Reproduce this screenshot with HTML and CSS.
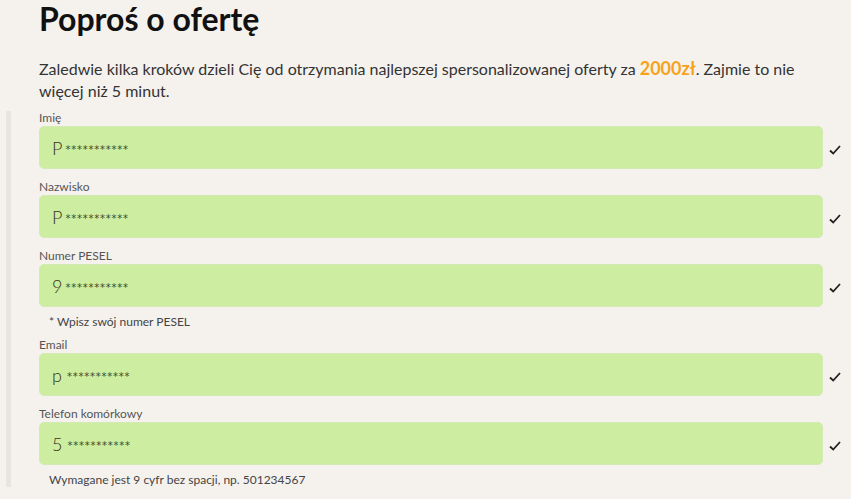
FILE: index.html
```html
<!DOCTYPE html>
<html lang="pl">
<head>
<meta charset="utf-8">
<link rel="stylesheet" href="styles.css">
</head>
<body>
<div class="page">
  <h1 class="title">Poproś o ofertę</h1>
  <p class="intro">Zaledwie kilka kroków dzieli Cię od otrzymania najlepszej spersonalizowanej oferty za <span class="price">2000zł</span>. Zajmie to nie więcej niż 5 minut.</p>
  <div class="form">
    <div class="field">
      <label class="label">Imię</label>
      <div class="row">
        <div class="input"><span class="first">P</span><span class="mask">***********</span></div>
        <svg class="check" width="12" height="10" viewBox="0 0 12 10"><path d="M1 5.5 L4.2 8.5 L11 1" fill="none" stroke="#222" stroke-width="1.8"/></svg>
      </div>
    </div>
    <div class="field">
      <label class="label">Nazwisko</label>
      <div class="row">
        <div class="input"><span class="first">P</span><span class="mask">***********</span></div>
        <svg class="check" width="12" height="10" viewBox="0 0 12 10"><path d="M1 5.5 L4.2 8.5 L11 1" fill="none" stroke="#222" stroke-width="1.8"/></svg>
      </div>
    </div>
    <div class="field">
      <label class="label">Numer PESEL</label>
      <div class="row">
        <div class="input"><span class="first">9</span><span class="mask">***********</span></div>
        <svg class="check" width="12" height="10" viewBox="0 0 12 10"><path d="M1 5.5 L4.2 8.5 L11 1" fill="none" stroke="#222" stroke-width="1.8"/></svg>
      </div>
      <div class="hint">* Wpisz swój numer PESEL</div>
    </div>
    <div class="field">
      <label class="label">Email</label>
      <div class="row">
        <div class="input"><span class="first">p</span><span class="mask gap">***********</span></div>
        <svg class="check" width="12" height="10" viewBox="0 0 12 10"><path d="M1 5.5 L4.2 8.5 L11 1" fill="none" stroke="#222" stroke-width="1.8"/></svg>
      </div>
    </div>
    <div class="field">
      <label class="label">Telefon komórkowy</label>
      <div class="row">
        <div class="input"><span class="first">5</span><span class="mask gap">***********</span></div>
        <svg class="check" width="12" height="10" viewBox="0 0 12 10"><path d="M1 5.5 L4.2 8.5 L11 1" fill="none" stroke="#222" stroke-width="1.8"/></svg>
      </div>
      <div class="hint">Wymagane jest 9 cyfr bez spacji, np. 501234567</div>
    </div>
  </div>
</div>
</body>
</html>
```
FILE: styles.css
```css
* { box-sizing: border-box; }
html, body { margin: 0; padding: 0; }
body {
  background: #f5f2ee;
  font-family: "Lato", "Open Sans", sans-serif;
  color: #333;
  width: 851px;
  height: 499px;
  overflow: hidden;
}
.page { padding: 0 0 0 39px; }
.title {
  margin: 0;
  padding-top: 0;
  font-size: 32px;
  line-height: 38px;
  font-weight: 700;
  color: #111;
}
.intro {
  margin: 20px 30px 0 0;
  font-size: 16px;
  line-height: 22px;
  color: #333;
}
.price { color: #f7a21b; font-weight: 700; font-size: 18px; line-height: 16px; }
.form {
  margin: 9px 0 0 -33px;
  padding-left: 28px;
  border-left: 5px solid #e8e5e0;
}
.field { margin-bottom: 11px; }
.label {
  display: block;
  font-size: 12px;
  line-height: 13px;
  color: #555;
  margin-bottom: 2px;
}
.row { display: flex; align-items: center; }
.input {
  width: 784px;
  height: 43px;
  background: #cdeda0;
  border: 1px solid #d4eab4;
  border-radius: 5px;
  padding-left: 12px;
  display: flex;
  align-items: center;
}
.first { font-size: 18px; font-weight: 300; color: #3a3320; }
.mask {
  font-family: "DejaVu Sans", sans-serif;
  font-size: 10px;
  color: #3c4a2a;
  margin-left: 3px;
  letter-spacing: 0.75px;
  position: relative;
  top: 2px;
}
.mask.gap { margin-left: 5px; }
.check { margin-left: 6px; margin-top: 4px; }
.hint {
  font-size: 12px;
  color: #444;
  margin: 8px 0 -2px 10px;
  line-height: 14px;
}
```
